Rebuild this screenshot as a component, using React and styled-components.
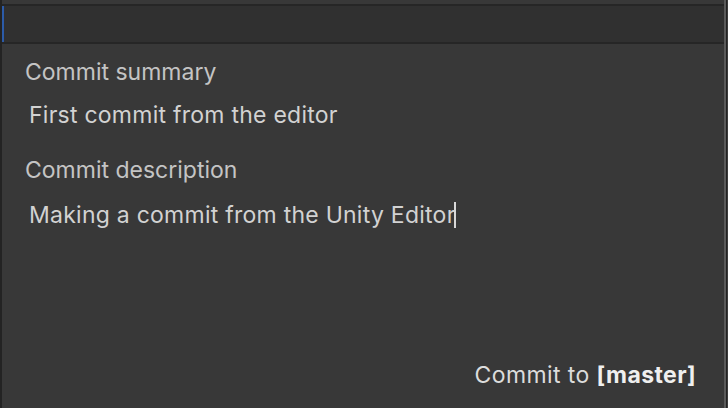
import React from 'react';
import styled, { createGlobalStyle } from 'styled-components';

const GlobalStyle = createGlobalStyle`
  html, body {
    margin: 0;
    padding: 0;
    background: #383838;
  }
`;

const Window = styled.div`
  width: 728px;
  height: 408px;
  display: flex;
  background: #383838;
  font-family: Inter, "Noto Sans", sans-serif;
  overflow: hidden;
`;

const LeftEdge = styled.div`
  width: 2px;
  background: #232323;
`;

const RightEdge = styled.div`
  width: 4px;
  display: flex;
`;

const EdgeLine = styled.div`
  width: ${(p) => p.w}px;
  background: ${(p) => p.color};
`;

const Panel = styled.div`
  flex: 1;
  display: flex;
  flex-direction: column;
`;

const TopStrip = styled.div`
  height: 4px;
  background: #383838;
`;

const Divider = styled.div`
  height: 2px;
  background: #262626;
`;

const Toolbar = styled.div`
  height: 36px;
  background: #303030;
  border-left: 2px solid #2c5ba8;
`;

const Body = styled.div`
  flex: 1;
  display: flex;
  flex-direction: column;
  padding: 14px 0 0 23px;
`;

const Label = styled.div`
  font-size: 23px;
  line-height: 28px;
  color: #c4c4c4;
`;

const Field = styled.div`
  font-size: 23px;
  line-height: 28px;
  letter-spacing: 0.25px;
  color: #d2d2d2;
  padding-left: 4px;
  margin-top: ${(p) => p.top}px;
  margin-bottom: ${(p) => p.bottom}px;
  display: flex;
  align-items: center;
`;

const Caret = styled.span`
  display: inline-block;
  width: 2px;
  height: 26px;
  margin-left: -2px;
  background: #d8d8d8;
`;

const Footer = styled.div`
  margin-top: auto;
  padding: 0 28px 19px 0;
  text-align: right;
  font-size: 23px;
  line-height: 28px;
  letter-spacing: 0.4px;
  color: #dcdcdc;

  b {
    color: #efefef;
    font-weight: 700;
  }
`;

export default function App() {
  return (
    <>
      <GlobalStyle />
      <Window>
        <LeftEdge />
        <Panel>
          <TopStrip />
          <Divider />
          <Toolbar />
          <Divider />
          <Body>
            <Label>Commit summary</Label>
            <Field top={15} bottom={27}>First commit from the editor</Field>
            <Label>Commit description</Label>
            <Field top={17} bottom={0}>
              Making a commit from the Unity Editor<Caret />
            </Field>
            <Footer>
              Commit to <b>[master]</b>
            </Footer>
          </Body>
        </Panel>
        <RightEdge>
          <EdgeLine w={2} color="#5a5a5a" />
          <EdgeLine w={1} color="#232323" />
          <EdgeLine w={1} color="#3c3c3c" />
        </RightEdge>
      </Window>
    </>
  );
}
